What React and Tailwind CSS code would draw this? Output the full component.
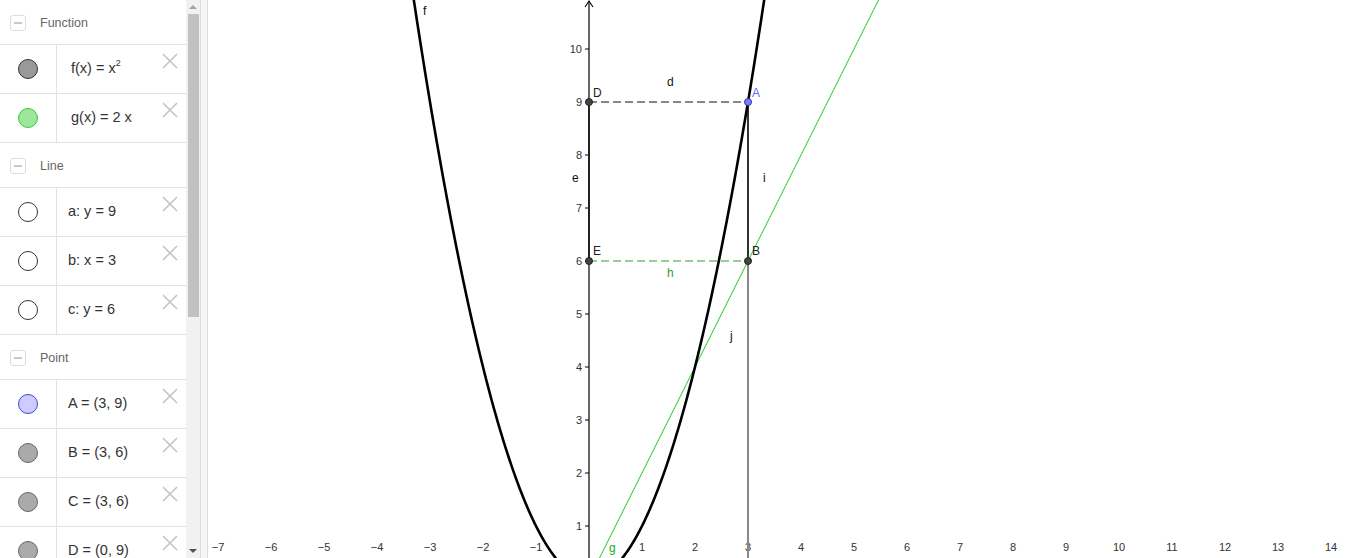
import React from 'react';

const SX = 53;
const OX = 589;
const OY = 579;
const px = (x) => OX + SX * x;
const py = (y) => OY - SX * y;

const groups = [
  {
    title: 'Function',
    items: [
      { label: <>f(x) = x<sup className="text-[9px] -top-[6px]">2</sup></>, fill: '#999999', stroke: '#333333', pad: 'pl-[14px]' },
      { label: 'g(x) = 2 x', fill: '#9ee69e', stroke: '#33cc33', pad: 'pl-[14px]' },
    ],
  },
  {
    title: 'Line',
    items: [
      { label: 'a: y = 9', fill: '#ffffff', stroke: '#333333' },
      { label: 'b: x = 3', fill: '#ffffff', stroke: '#333333' },
      { label: 'c: y = 6', fill: '#ffffff', stroke: '#333333' },
    ],
  },
  {
    title: 'Point',
    items: [
      { label: 'A = (3, 9)', fill: '#ccccff', stroke: '#4444dd' },
      { label: 'B = (3, 6)', fill: '#aaaaaa', stroke: '#666666' },
      { label: 'C = (3, 6)', fill: '#aaaaaa', stroke: '#666666' },
      { label: 'D = (0, 9)', fill: '#aaaaaa', stroke: '#666666' },
    ],
  },
];

const CloseIcon = () => (
  <svg width="18" height="18" viewBox="0 0 18 18" className="shrink-0">
    <path d="M2 2 L16 16 M16 2 L2 16" stroke="#c4c4c4" strokeWidth="1.6" fill="none" />
  </svg>
);

const AlgebraPanel = () => (
  <div className="w-[186px] shrink-0 overflow-hidden bg-white" style={{ fontFamily: '"Liberation Sans", Arial, sans-serif' }}>
    {groups.map((g) => (
      <div key={g.title}>
        {/* group header */}
        <div className="h-[45px] flex items-center pt-[2px] border-b border-[#e2e2e2]">
          <div className="ml-[10px] w-[16px] h-[16px] rounded-[3px] border border-[#dddddd] flex items-center justify-center">
            <div className="w-[8px] h-[2px] bg-[#c8c8c8]" />
          </div>
          <span className="ml-[14px] text-[12.5px] text-[#666666]">{g.title}</span>
        </div>
        {g.items.map((it, i) => (
          <div key={i} className="h-[49px] flex border-b border-[#e2e2e2]">
            <div className="w-[57px] shrink-0 flex items-center justify-center border-r border-[#e2e2e2]">
              <div
                className="w-[20px] h-[20px] rounded-full border"
                style={{ background: it.fill, borderColor: it.stroke }}
              />
            </div>
            <div className={`flex-1 flex items-center ${it.pad || 'pl-[11px]'} text-[14.5px] text-[#333333] whitespace-pre`}>
              {it.label}
            </div>
            <div className="pt-[7px] pr-[7px]">
              <CloseIcon />
            </div>
          </div>
        ))}
      </div>
    ))}
  </div>
);

const Scrollbar = () => (
  <div className="w-[14px] shrink-0 bg-[#f1f1f1] flex flex-col items-center">
    <svg width="10" height="14" viewBox="0 0 10 14">
      <path d="M1 9 L5 5 L9 9 Z" fill="#a3a3a3" />
    </svg>
    <div className="w-[11px] h-[303px] bg-[#c1c1c1]" />
    <div className="flex-1" />
    <svg width="10" height="14" viewBox="0 0 10 14">
      <path d="M1 5 L5 9 L9 5 Z" fill="#505050" />
    </svg>
  </div>
);

const Graph = () => {
  const pts = [];
  for (let x = -3.45; x <= 3.45; x += 0.025) pts.push(`${px(x).toFixed(2)},${py(x * x).toFixed(2)}`);
  const para = 'M' + pts.join(' L');
  const xs = [];
  for (let n = -7; n <= 14; n++) if (n !== 0) xs.push(n);
  const ys = [1, 2, 3, 4, 5, 6, 7, 8, 9, 10];
  const font = '"Liberation Sans", Arial, sans-serif';

  return (
    <svg width="1158" height="558" viewBox="208 0 1158 558" className="block shrink-0" fontFamily={font}>
      <rect x="208" y="0" width="1158" height="558" fill="#ffffff" />
      {/* y axis */}
      <line x1={OX} y1="1" x2={OX} y2="558" stroke="#000" strokeWidth="1.2" />
      <path d={`M${OX - 4} 7 L${OX} 1 L${OX + 4} 7`} stroke="#000" strokeWidth="1.1" fill="none" />
      {ys.map((n) => (
        <g key={n}>
          <line x1={OX - 4} y1={py(n)} x2={OX} y2={py(n)} stroke="#000" strokeWidth="1" />
          <text x={OX - 7} y={py(n) + 4} textAnchor="end" fontSize="11" fill="#333">{n}</text>
        </g>
      ))}
      {xs.map((n) => (
        <text key={n} x={px(n)} y="551" textAnchor="middle" fontSize="11" fill="#333">
          {n < 0 ? `\u2212${-n}` : n}
        </text>
      ))}

      {/* segment e on y axis */}
      <line x1={OX} y1={py(9)} x2={OX} y2={py(6)} stroke="#222" strokeWidth="2" />

      {/* line g: y = 2x */}
      <line x1={px(-0.3)} y1={py(-0.6)} x2={px(6)} y2={py(12)} stroke="#22cc22" strokeWidth="1" />

      {/* dashed d and h */}
      <line x1={OX} y1={py(9)} x2={px(3)} y2={py(9)} stroke="#111" strokeWidth="1" strokeDasharray="8 4" />
      <line x1={OX} y1={py(6)} x2={px(3)} y2={py(6)} stroke="#339933" strokeWidth="1" strokeDasharray="8 4" />

      {/* j segment */}
      <line x1={px(3)} y1={py(6)} x2={px(3)} y2="558" stroke="#888" strokeWidth="2" />
      {/* i segment */}
      <line x1={px(3)} y1={py(9)} x2={px(3)} y2={py(6)} stroke="#333" strokeWidth="2" />

      {/* parabola f */}
      <path d={para} stroke="#000" strokeWidth="2.6" fill="none" strokeLinejoin="round" />

      {/* points */}
      <circle cx={OX} cy={py(9)} r="3.5" fill="#444" stroke="#222" strokeWidth="1" />
      <circle cx={OX} cy={py(6)} r="3.5" fill="#444" stroke="#222" strokeWidth="1" />
      <circle cx={px(3)} cy={py(6)} r="3.5" fill="#444" stroke="#222" strokeWidth="1" />
      <circle cx={px(3)} cy={py(9)} r="3.5" fill="#7b7bff" stroke="#3333aa" strokeWidth="1" />

      {/* labels */}
      <g fontSize="12">
        <text x="593" y="97" fill="#222">D</text>
        <text x="752" y="97" fill="#6666ff">A</text>
        <text x="593" y="255" fill="#222">E</text>
        <text x="752" y="255" fill="#222">B</text>
        <text x="667" y="86" fill="#111">d</text>
        <text x="572" y="182" fill="#111">e</text>
        <text x="667" y="277" fill="#339933">h</text>
        <text x="763" y="182" fill="#111">i</text>
        <text x="730" y="340" fill="#111">j</text>
        <text x="423" y="15" fill="#111">f</text>
        <text x="609" y="552" fill="#22aa22">g</text>
      </g>
    </svg>
  );
};

export default function App() {
  return (
    <div className="w-[1366px] h-[558px] overflow-hidden flex bg-white">
      <AlgebraPanel />
      <Scrollbar />
      <div className="w-[8px] shrink-0 bg-[#f5f5f5] border-l border-r border-[#dedede]" />
      <Graph />
    </div>
  );
}
